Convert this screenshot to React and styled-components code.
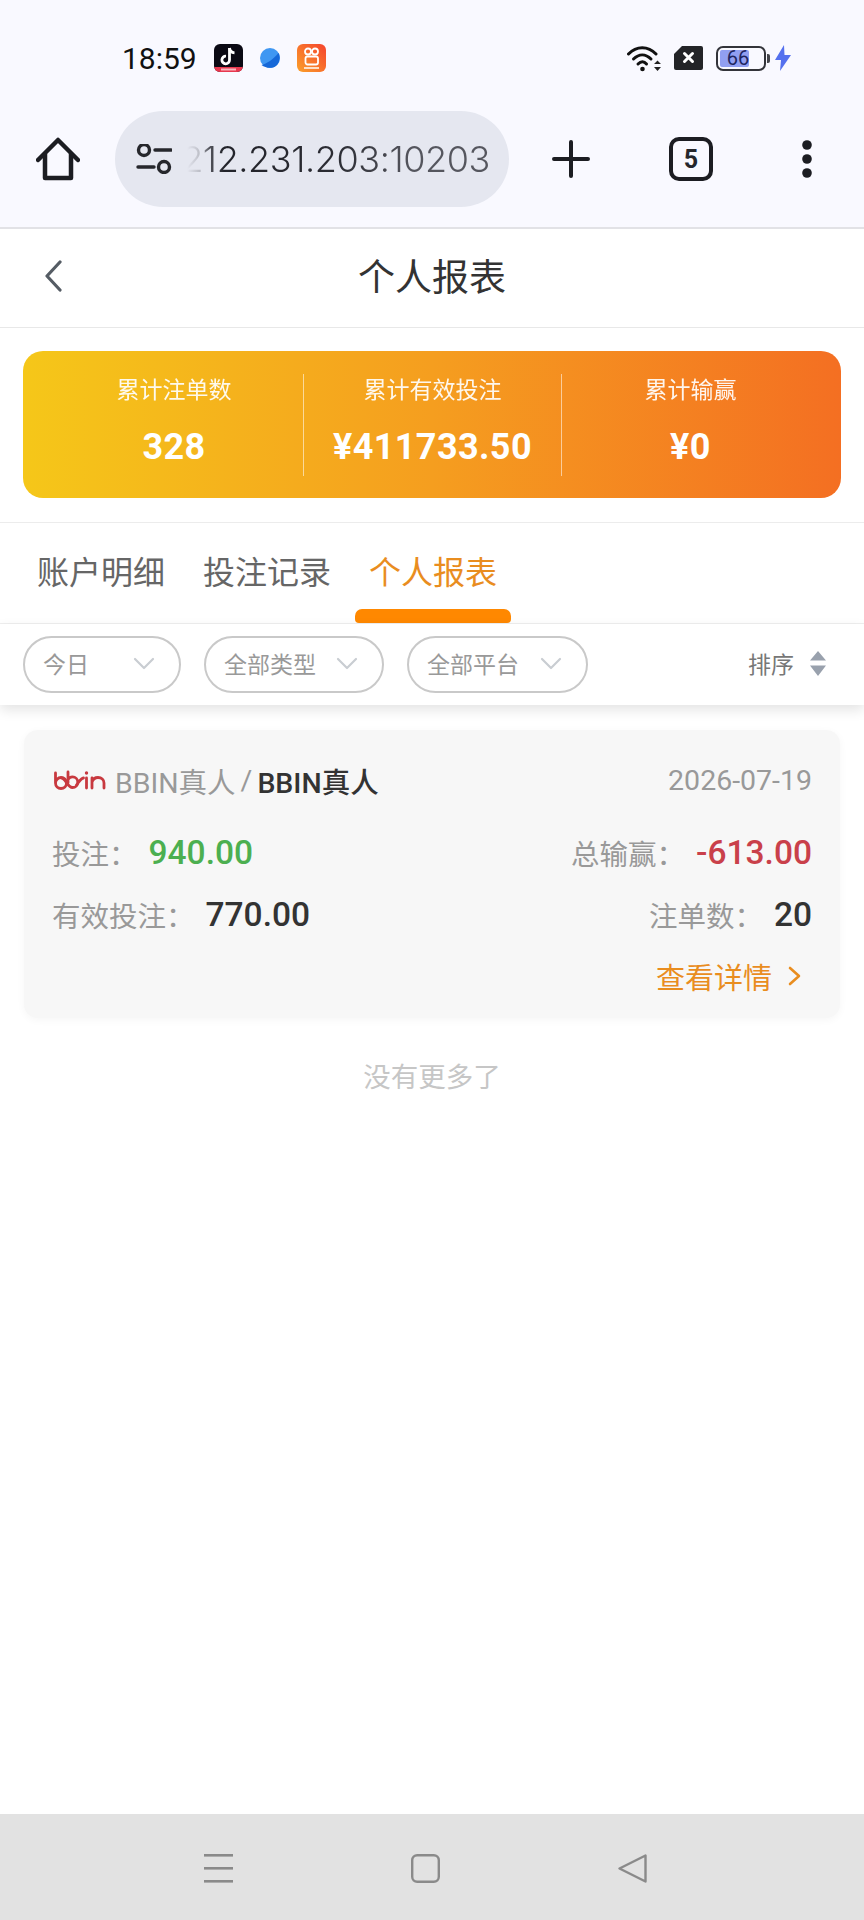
import React from 'react';
import styled, { createGlobalStyle } from 'styled-components';

const GlobalStyle = createGlobalStyle`
  html, body {
    margin: 0;
    padding: 0;
    background: #fff;
  }
  body {
    font-family: Roboto, "Noto Sans CJK SC", sans-serif;
  }
  * {
    box-sizing: border-box;
  }
`;

const Page = styled.div`
  width: 864px;
  height: 1920px;
  display: flex;
  flex-direction: column;
  overflow: hidden;
  background: #fff;
`;

/* browser chrome */
const Chrome = styled.div`
  height: 229px;
  background: #f9f9ff;
  border-bottom: 2px solid #e2e2e6;
`;

const StatusBar = styled.div`
  height: 111px;
  padding: 5px 73px 0 122px;
  display: flex;
  align-items: center;
  justify-content: space-between;
`;

const StatusGroup = styled.div`
  display: flex;
  align-items: center;
  gap: ${(p) => p.$gap}px;
`;

const Time = styled.span`
  font-size: 30px;
  color: #111;
`;

const Battery = styled.div`
  position: relative;
  width: 50px;
  height: 25px;
  border: 2px solid #33343a;
  border-radius: 7px;
  padding: 2px;
  display: flex;
  align-items: center;
  justify-content: center;
  font-size: 20px;
  color: #1e2560;
  &::before {
    content: '';
    position: absolute;
    left: 2px;
    top: 2px;
    bottom: 2px;
    width: 29px;
    border-radius: 2px;
    background: #919ff2;
  }
  &::after {
    content: '';
    position: absolute;
    right: -6px;
    top: 6px;
    width: 3px;
    height: 9px;
    border-radius: 0 2px 2px 0;
    background: #44454b;
  }
`;

const BatteryText = styled.span`
  position: relative;
  margin-right: 6px;
`;

const BatteryWrap = styled.div`
  display: flex;
  align-items: center;
  gap: 9px;
`;

const Toolbar = styled.div`
  height: 96px;
  display: grid;
  grid-template-columns: 115px 394px 124px 116px 115px;
  align-items: center;
  justify-items: center;
`;

const UrlPill = styled.div`
  width: 100%;
  height: 96px;
  border-radius: 48px;
  background: #e5e7f0;
  padding: 0 19px 0 21px;
  display: flex;
  align-items: center;
  justify-content: space-between;
`;

const UrlText = styled.span`
  flex: none;
  font-family: Inter, Roboto, sans-serif;
  font-size: 36px;
  font-weight: 300;
  letter-spacing: -0.4px;
  white-space: nowrap;
  color: transparent;
  background: linear-gradient(90deg, rgba(34, 35, 42, 0) 2%, rgba(34, 35, 42, 0.2) 6%, #55565e 9%, #22232a 14%, #2b2c33 50%, #55565e 75%, #55565e 100%);
  -webkit-background-clip: text;
  background-clip: text;
`;

const TabCount = styled.div`
  width: 44px;
  height: 44px;
  border: 4px solid #1c1d22;
  border-radius: 10px;
  display: flex;
  align-items: center;
  justify-content: center;
  font-size: 25px;
  font-weight: 700;
  color: #26272c;
`;

/* page header */
const Header = styled.header`
  position: relative;
  height: 99px;
  padding-bottom: 6px;
  border-bottom: 1px solid #e8e8e8;
  display: flex;
  align-items: center;
  justify-content: center;
`;

const HeaderTitle = styled.h1`
  margin: 0;
  font-size: 37px;
  font-weight: 400;
  color: #333;
`;

const BackIcon = styled.svg`
  position: absolute;
  left: 44px;
  top: 31px;
`;

const Summary = styled.section`
  padding: 23px 23px 24px;
  border-bottom: 1px solid #ececec;
`;

const SummaryCard = styled.div`
  height: 147px;
  padding: 0 22px;
  border-radius: 20px;
  background: linear-gradient(90deg, #f5c719 0%, #f59e1f 50%, #f46f22 100%);
  display: grid;
  grid-template-columns: repeat(3, 1fr);
  align-items: center;
`;

const SummaryCol = styled.div`
  height: 102px;
  display: flex;
  flex-direction: column;
  align-items: center;
  color: #fff;
  border-left: ${(p) => (p.$divider ? '1px solid rgba(255,255,255,.55)' : 'none')};
`;

const SummaryLabel = styled.div`
  margin-top: 1px;
  font-size: 23px;
  line-height: 32px;
  opacity: 0.92;
`;

const SummaryValue = styled.div`
  margin-top: 12px;
  font-size: 36px;
  line-height: 56px;
  font-weight: 700;
  letter-spacing: 0.4px;
`;

/* tabs */
const Tabs = styled.nav`
  height: 101px;
  padding-left: 37px;
  border-bottom: 1px solid #efefef;
  display: flex;
  gap: 38px;
`;

const Tab = styled.div`
  position: relative;
  height: 100px;
  padding-bottom: 6px;
  display: flex;
  align-items: center;
  font-size: 32px;
  color: ${(p) => (p.$active ? '#e98d1f' : '#666')};
`;

const TabMark = styled.span`
  position: absolute;
  left: -14px;
  right: -14px;
  bottom: 0;
  height: 14px;
  border-radius: 7px 7px 4px 4px;
  background: #ff8800;
`;

/* filters */
const FilterBar = styled.div`
  position: relative;
  height: 81px;
  padding: 12px 37px 0 23px;
  background: #fff;
  box-shadow: 0 5px 12px rgba(0, 0, 0, 0.11);
  display: flex;
  align-items: flex-start;
  gap: 23px;
`;

const FilterPill = styled.div`
  width: ${(p) => p.$width}px;
  height: 57px;
  padding: 0 24px 3px 18px;
  border: 2px solid #c9c9c9;
  border-radius: 29px;
  display: flex;
  align-items: center;
  justify-content: space-between;
  font-size: 23px;
  color: #999;
`;

const SortButton = styled.div`
  margin-left: auto;
  height: 57px;
  padding-bottom: 3px;
  display: flex;
  align-items: center;
  gap: 15px;
  font-size: 23px;
  color: #777;
`;

/* list */
const Main = styled.main`
  flex: 1;
  padding: 25px 24px 0;
`;

const Card = styled.article`
  height: 288px;
  padding: 30px 28px 8px;
  border-radius: 14px;
  background: #f7f7f7;
  box-shadow: 0 2px 8px rgba(0, 0, 0, 0.04);
`;

const TitleRow = styled.div`
  height: 40px;
  margin-bottom: 21px;
  padding-left: 1px;
  display: flex;
  align-items: center;
  font-size: 28.500px;
`;

const Platform = styled.span`
  margin-left: 7px;
  color: #999;
`;

const Slash = styled.span`
  margin: 0 5px;
  color: #999;
`;

const Game = styled.span`
  color: #333;
  font-weight: 500;
`;

const DateText = styled.span`
  margin-left: auto;
  color: #999;
`;

const Row = styled.div`
  height: 62px;
  display: flex;
  align-items: center;
  justify-content: space-between;
  font-size: 28.500px;
`;

const Stat = styled.div`
  display: flex;
  align-items: center;
`;

const StatLabel = styled.span`
  color: #999;
`;

const StatValue = styled.span`
  margin-left: 11px;
  font-size: 33.500px;
  font-weight: 500;
  color: ${(p) => p.$color || '#333'};
`;

const DetailLink = styled.div`
  margin: 0 11px 0 auto;
  display: flex;
  align-items: center;
  gap: 16px;
  font-size: 29px;
  color: #e98d1f;
`;

const NoMore = styled.div`
  margin-top: 40px;
  height: 40px;
  line-height: 40px;
  text-align: center;
  font-size: 27.500px;
  color: #c6c6c6;
`;

/* system nav */
const NavBar = styled.div`
  height: 106px;
  background: #e2e2e2;
  padding: 2px 0 0 204px;
  display: flex;
  align-items: center;
  gap: 178px;
`;

const Chevron = () => (
  <svg width="22" height="13" viewBox="0 0 22 13" fill="none" stroke="#c9cdd2" strokeWidth="2.2" strokeLinecap="round" strokeLinejoin="round">
    <path d="M2 2l9 9 9-9" />
  </svg>
);

const TikTokIcon = () => (
  <svg width="29" height="28" viewBox="0 0 29 28">
    <defs>
      <clipPath id="tt"><rect width="29" height="28" rx="6" /></clipPath>
    </defs>
    <g clipPath="url(#tt)">
      <rect width="29" height="28" fill="#0b0a14" />
      <rect y="23" width="29" height="5" fill="#e8384f" />
      <path d="M15.500 4v12a3.800 3.800 0 1 1-3.500-3.800" fill="none" stroke="#fff" strokeWidth="2.800" />
      <path d="M15.500 4c.3 2.800 2.200 4.600 5 4.800" fill="none" stroke="#fff" strokeWidth="2.800" />
      <rect x="7" y="24.500" width="15" height="2" fill="#f7b5bd" />
    </g>
  </svg>
);

const PlanetIcon = () => (
  <svg width="20" height="20" viewBox="0 0 20 20">
    <circle cx="10" cy="10" r="10" fill="#3f97f2" />
    <path d="M1.500 17c5-1 12-6 17-12 1.500 2 2 8-1.500 12s-11 3.500-15.500 0z" fill="#1668d8" />
  </svg>
);

const KuaishouIcon = () => (
  <svg width="29" height="28" viewBox="0 0 29 28">
    <defs>
      <linearGradient id="ks" x1="0" y1="1" x2="1" y2="0">
        <stop offset="0" stopColor="#fba02a" />
        <stop offset="1" stopColor="#f5432e" />
      </linearGradient>
    </defs>
    <rect width="29" height="28" rx="6" fill="url(#ks)" />
    <circle cx="11" cy="7.500" r="3" fill="none" stroke="#fff" strokeWidth="1.800" />
    <circle cx="18" cy="7.500" r="3" fill="none" stroke="#fff" strokeWidth="1.800" />
    <rect x="8.500" y="12.500" width="12.500" height="8" rx="2" fill="none" stroke="#fff" strokeWidth="1.800" />
    <rect x="7" y="23" width="15" height="2" fill="#fde0c8" />
  </svg>
);

const WifiIcon = () => (
  <svg width="34" height="27" viewBox="0 0 34 27" fill="none" stroke="#111" strokeLinecap="round">
    <path d="M1.500 9C9.500 .500 21 .500 29 9" strokeWidth="3" />
    <path d="M6.500 14c5.500-5.500 12-5.500 17.500 0" strokeWidth="3" />
    <path d="M11 19c3-3 6-3 8.500 0" strokeWidth="3" />
    <circle cx="15.500" cy="24" r="2.300" fill="#111" stroke="none" />
    <path d="M27 19l3.500-3.500L34 19zM27 22h7l-3.500 4z" fill="#222" stroke="none" />
  </svg>
);

const SimIcon = () => (
  <svg width="29" height="24" viewBox="0 0 29 24">
    <path d="M8 0h19a2 2 0 0 1 2 2v20a2 2 0 0 1-2 2H2a2 2 0 0 1-2-2V8z" fill="#232427" />
    <path d="M10.500 7.500l8 8M18.500 7.500l-8 8" stroke="#fff" strokeWidth="3" strokeLinecap="round" />
  </svg>
);

const BoltIcon = () => (
  <svg width="16" height="26" viewBox="0 0 16 26">
    <path d="M9 0L0 15h6l-1 11 11-16H9.500z" fill="#5470ee" />
  </svg>
);

const HomeIcon = () => (
  <svg width="44" height="44" viewBox="0 0 44 44" fill="none" stroke="#1c1d22" strokeWidth="4.500" strokeLinejoin="round" strokeLinecap="round">
    <path d="M2 23L22 3l20 20" />
    <path d="M9 17v24h26V17" />
  </svg>
);

const SiteInfoIcon = () => (
  <svg width="36" height="30" viewBox="0 0 36 30" fill="none" stroke="#26272c" strokeWidth="3.400" strokeLinecap="round">
    <circle cx="8" cy="6" r="5.500" />
    <path d="M19 6h16" />
    <path d="M2 23h16" />
    <circle cx="28" cy="23" r="5.500" />
  </svg>
);

const PlusIcon = () => (
  <svg width="38" height="38" viewBox="0 0 38 38" stroke="#1c1d22" strokeWidth="4" strokeLinecap="round">
    <path d="M19 2v34M2 19h34" />
  </svg>
);

const MoreIcon = () => (
  <svg width="10" height="38" viewBox="0 0 10 38" fill="#1c1d22">
    <circle cx="5" cy="5" r="4.800" />
    <circle cx="5" cy="19" r="4.800" />
    <circle cx="5" cy="33" r="4.800" />
  </svg>
);

const BackArrow = () => (
  <BackIcon width="18" height="32" viewBox="0 0 18 32" fill="none" stroke="#555c64" strokeWidth="3.200" strokeLinecap="round" strokeLinejoin="round">
    <path d="M16 2L3 16l13 14" />
  </BackIcon>
);

const SortIcon = () => (
  <svg width="18" height="25" viewBox="0 0 18 25" fill="#99a1ad">
    <path d="M9 0l8 9.500H1zM1 14.500h16L9 25z" />
  </svg>
);

const BbinLogo = () => (
  <svg width="55" height="22" viewBox="0 0 54 22" fill="none" stroke="#c8393f" strokeWidth="2.800" strokeLinecap="round">
    <path d="M2 4v10a5.500 5.500 0 1 0 5.500-5.500c-3 0-5.500 3-5.500 5.500" />
    <path d="M8 9c4 0 6 9.500 11 9.500a5.300 5.300 0 0 0 0-10.600c-2 0-3.500 1-4.500 2.600M14.500 3v11" />
    <path d="M30 9c-3 .5-5 5-7 7" />
    <circle cx="33" cy="4" r="1.700" fill="#c8393f" stroke="none" />
    <path d="M33 9v10" />
    <path d="M38.500 19V9M38.500 13c1-3 3-4.500 6-4.500 3.500 0 6 2 6 5.500v5" />
  </svg>
);

const SmallArrow = () => (
  <svg width="13" height="20" viewBox="0 0 13 20" fill="none" stroke="#e98d1f" strokeWidth="2.600" strokeLinecap="round" strokeLinejoin="round">
    <path d="M2 2l9 8-9 8" />
  </svg>
);

const NavMenu = () => (
  <svg width="29" height="29" viewBox="0 0 29 29" fill="#8a8a8a">
    <rect y="0" width="29" height="2.600" />
    <rect y="13" width="29" height="2.600" />
    <rect y="26" width="29" height="2.600" />
  </svg>
);

const NavHome = () => (
  <svg width="29" height="29" viewBox="0 0 29 29" fill="none" stroke="#8a8a8a" strokeWidth="2.400">
    <rect x="1.200" y="1.200" width="26.600" height="26.600" rx="5" />
  </svg>
);

const NavBack = () => (
  <svg width="29" height="29" viewBox="0 0 29 29" fill="none" stroke="#8a8a8a" strokeWidth="2.400" strokeLinejoin="round">
    <path d="M27.500 1.500v26L1.500 14.500z" />
  </svg>
);

const summary = [
  { label: '累计注单数', value: '328' },
  { label: '累计有效投注', value: '¥411733.50' },
  { label: '累计输赢', value: '¥0' },
];

const tabs = ['账户明细', '投注记录', '个人报表'];

const filters = [
  { label: '今日', width: 158 },
  { label: '全部类型', width: 180 },
  { label: '全部平台', width: 181 },
];

const App = () => {
  return (
    <Page>
      <GlobalStyle />
      <Chrome>
        <StatusBar>
          <StatusGroup $gap={17}>
            <Time>18:59</Time>
            <TikTokIcon />
            <PlanetIcon />
            <KuaishouIcon />
          </StatusGroup>
          <StatusGroup $gap={13}>
            <WifiIcon />
            <SimIcon />
            <BatteryWrap>
              <Battery>
                <BatteryText>66</BatteryText>
              </Battery>
              <BoltIcon />
            </BatteryWrap>
          </StatusGroup>
        </StatusBar>
        <Toolbar>
          <HomeIcon />
          <UrlPill>
            <SiteInfoIcon />
            <UrlText>212.231.203:10203</UrlText>
          </UrlPill>
          <PlusIcon />
          <TabCount>5</TabCount>
          <MoreIcon />
        </Toolbar>
      </Chrome>

      <Header>
        <BackArrow />
        <HeaderTitle>个人报表</HeaderTitle>
      </Header>

      <Summary>
        <SummaryCard>
          {summary.map((item, index) => (
            <SummaryCol key={item.label} $divider={index > 0}>
              <SummaryLabel>{item.label}</SummaryLabel>
              <SummaryValue>{item.value}</SummaryValue>
            </SummaryCol>
          ))}
        </SummaryCard>
      </Summary>

      <Tabs>
        {tabs.map((tab, index) => (
          <Tab key={tab} $active={index === 2}>
            {tab}
            {index === 2 && <TabMark />}
          </Tab>
        ))}
      </Tabs>

      <FilterBar>
        {filters.map((filter) => (
          <FilterPill key={filter.label} $width={filter.width}>
            {filter.label}
            <Chevron />
          </FilterPill>
        ))}
        <SortButton>
          排序
          <SortIcon />
        </SortButton>
      </FilterBar>

      <Main>
        <Card>
          <TitleRow>
            <BbinLogo />
            <Platform>BBIN真人</Platform>
            <Slash>/</Slash>
            <Game>BBIN真人</Game>
            <DateText>2026-07-19</DateText>
          </TitleRow>
          <Row>
            <Stat>
              <StatLabel>投注：</StatLabel>
              <StatValue $color="#4caf50">940.00</StatValue>
            </Stat>
            <Stat>
              <StatLabel>总输赢：</StatLabel>
              <StatValue $color="#c9404a">-613.00</StatValue>
            </Stat>
          </Row>
          <Row>
            <Stat>
              <StatLabel>有效投注：</StatLabel>
              <StatValue>770.00</StatValue>
            </Stat>
            <Stat>
              <StatLabel>注单数：</StatLabel>
              <StatValue>20</StatValue>
            </Stat>
          </Row>
          <Row>
            <DetailLink>
              查看详情
              <SmallArrow />
            </DetailLink>
          </Row>
        </Card>
        <NoMore>没有更多了</NoMore>
      </Main>

      <NavBar>
        <NavMenu />
        <NavHome />
        <NavBack />
      </NavBar>
    </Page>
  );
};

export default App;
